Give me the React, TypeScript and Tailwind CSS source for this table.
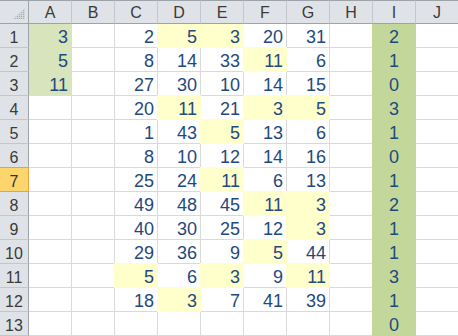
import React from "react";

type Fill = "none" | "yellow" | "lite" | "green";

// one row per sheet row: values for columns A..J ("" = empty)
const rows: (string | number)[][] = [
  [3, "", 2, 5, 3, 20, 31, "", 2, ""],
  [5, "", 8, 14, 33, 11, 6, "", 1, ""],
  [11, "", 27, 30, 10, 14, 15, "", 0, ""],
  ["", "", 20, 11, 21, 3, 5, "", 3, ""],
  ["", "", 1, 43, 5, 13, 6, "", 1, ""],
  ["", "", 8, 10, 12, 14, 16, "", 0, ""],
  ["", "", 25, 24, 11, 6, 13, "", 1, ""],
  ["", "", 49, 48, 45, 11, 3, "", 2, ""],
  ["", "", 40, 30, 25, 12, 3, "", 1, ""],
  ["", "", 29, 36, 9, 5, 44, "", 1, ""],
  ["", "", 5, 6, 3, 9, 11, "", 3, ""],
  ["", "", 18, 3, 7, 41, 39, "", 1, ""],
  ["", "", "", "", "", "", "", "", 0, ""],
];

// highlighted cells ("row-col", 1-based row, 0-based col)
const yellow = new Set([
  "1-3", "1-4", "2-5", "4-3", "4-5", "4-6", "5-4", "7-4",
  "8-5", "8-6", "9-6", "10-5", "11-2", "11-4", "11-6", "12-3",
]);

const cols = ["A", "B", "C", "D", "E", "F", "G", "H", "I", "J"];

const fillClass: Record<Fill, string> = {
  none: "border-[#d9d9d9]",
  yellow:
    "bg-[#ffffcc] border-[#ffffcc] shadow-[-1px_0_0_0_#ffffcc,0_-1px_0_0_#ffffcc,-1px_-1px_0_0_#ffffcc]",
  lite:
    "bg-[#d8e4bc] border-[#d8e4bc] shadow-[-1px_0_0_0_#d8e4bc,0_-1px_0_0_#d8e4bc,-1px_-1px_0_0_#d8e4bc]",
  green:
    "bg-[#c4d79b] border-[#c4d79b] shadow-[-1px_0_0_0_#c4d79b,0_-1px_0_0_#c4d79b,-1px_-1px_0_0_#c4d79b]",
};

function getFill(r: number, c: number): Fill {
  if (c === 0 && r <= 3) return "lite";
  if (c === 8) return "green";
  if (yellow.has(`${r}-${c}`)) return "yellow";
  return "none";
}

function CornerMark() {
  return (
    <svg width="12" height="11" viewBox="0 0 12 11" className="absolute right-[3px] bottom-[4px]">
      <defs>
        <pattern id="dots" width="2" height="2" patternUnits="userSpaceOnUse">
          <rect width="2" height="2" fill="#d2d5d9" />
          <rect width="1" height="1" fill="#a9adb2" />
        </pattern>
      </defs>
      <polygon points="12,0 12,11 0,11" fill="url(#dots)" />
    </svg>
  );
}

export default function App() {
  return (
    <div className="w-[458px] h-[336px] overflow-hidden bg-white font-['Liberation_Sans',Arial,sans-serif]">
      <div className="grid grid-cols-[29px_repeat(10,43px)] grid-rows-[24px_repeat(13,24px)] w-[459px]">
        {/* Corner */}
        <div className="relative z-10 bg-[#dfe3e8] border-t border-b border-r border-t-[#9ea3a9] border-b-[#9ea3a9] border-r-[#9ea3a9]">
          <CornerMark />
        </div>

        {/* Column headers */}
        {cols.map((c) => (
          <div
            key={c}
            className="relative z-10 flex items-center justify-center bg-[#dfe3e8] border-t border-b border-r border-t-[#9ea3a9] border-b-[#9ea3a9] border-r-[#c3c7cc] text-[16px] text-[#3a3a3a] pt-[1px]"
          >
            {c}
          </div>
        ))}

        {rows.map((row, ri) => {
          const r = ri + 1;
          const active = r === 7;
          return (
            <React.Fragment key={r}>
              {/* Row header */}
              <div
                className={`relative z-10 flex items-end justify-center pb-[1px] text-[16px] leading-none h-[24px] border-r border-b ${
                  active
                    ? "bg-[#fcd56c] border-[#eda13a] shadow-[0_-1px_0_0_#eda13a] text-[#333]"
                    : "bg-[#dfe3e8] border-r-[#9ea3a9] border-b-[#c3c7cc] text-[#3a3a3a]"
                }`}
              >
                {r}
              </div>

              {/* Cells */}
              {row.map((v, ci) => {
                const fill = getFill(r, ci);
                return (
                  <div
                    key={ci}
                    className={`flex items-end pb-[1px] h-[24px] border-r border-b text-[18px] leading-none text-[#1f497d] ${
                      ci === 8 ? "justify-center" : "justify-end pr-[3px]"
                    } ${fillClass[fill]}`}
                  >
                    {v}
                  </div>
                );
              })}
            </React.Fragment>
          );
        })}
      </div>
    </div>
  );
}
